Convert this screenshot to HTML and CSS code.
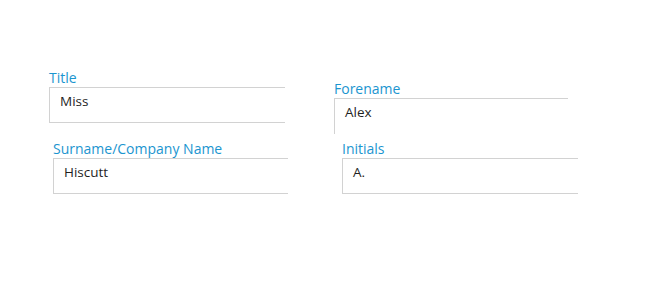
FILE: index.html
```html
<!DOCTYPE html>
<html lang="en">
<head>
    <meta charset="UTF-8">
    <title>Customer Details</title>
    <link rel="stylesheet" href="styles.css">
</head>
<body>
    <div class="form">
        <div class="column left">
            <div class="field">
                <label>Title</label>
                <div class="box open-right">Miss</div>
            </div>
            <div class="field shift">
                <label>Surname/Company Name</label>
                <div class="box open-right">Hiscutt</div>
            </div>
        </div>
        <div class="column right">
            <div class="field">
                <label>Forename</label>
                <div class="box open-right open-bottom">Alex</div>
            </div>
            <div class="field shift">
                <label>Initials</label>
                <div class="box open-right">A.</div>
            </div>
        </div>
    </div>
</body>
</html>
```

FILE: styles.css
```css
body {
    margin: 0;
    background: #ffffff;
    font-family: "Open Sans", "Noto Sans", sans-serif;
}
.form {
    display: flex;
    padding-top: 68px;
    padding-left: 49px;
}
.column {
    display: flex;
    flex-direction: column;
}
.left {
    width: 239px;
    gap: 16px;
}
.right {
    margin-left: 46px;
    padding-top: 11px;
    gap: 5px;
}
.field {
    width: 236px;
}
.left .field.shift {
    margin-left: 4px;
    width: 235px;
}
.right .field {
    width: 234px;
}
.right .field.shift {
    margin-left: 8px;
    width: 236px;
}
.field label {
    display: block;
    font-size: 14px;
    line-height: 19px;
    color: #1b95cf;
}
.box {
    border: 1px solid #d2d2d2;
    padding: 4px 0 0 10px;
    box-sizing: border-box;
    height: 36px;
    font-size: 13.5px;
    line-height: 19px;
    color: #1f1f1f;
}
.open-right {
    border-right: none;
}
.open-bottom {
    border-bottom: none;
}
```
